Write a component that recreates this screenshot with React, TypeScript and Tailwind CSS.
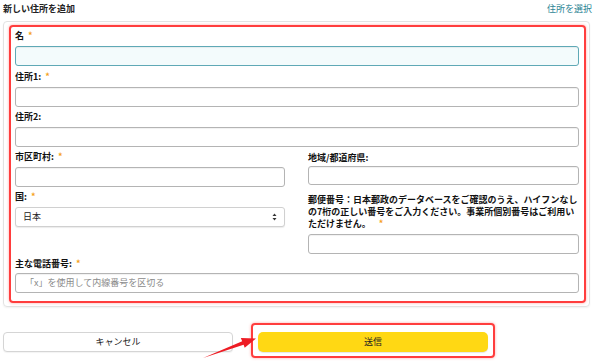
import React from "react";

const Star = () => <span className="text-[#f5a11c] ml-[4px]">*</span>;

const Label = ({ children, className = "" }: { children: React.ReactNode; className?: string }) => (
  <div className={"text-[9px] leading-[12px] font-bold text-[#111] " + className}>{children}</div>
);

const Input = ({ className = "", placeholder }: { className?: string; placeholder?: string }) => (
  <div
    className={
      "h-[20px] rounded-[3px] border border-[#b4b4b4] bg-white shadow-[inset_0_1px_1px_rgba(0,0,0,0.06)] flex items-center px-[9px] text-[9px] text-[#8a8a8a] " +
      className
    }
  >
    {placeholder}
  </div>
);

export default function App() {
  return (
    <div
      className="relative w-[600px] h-[364px] bg-white overflow-hidden"
      style={{ fontFamily: '"Noto Sans CJK JP", "Noto Sans", sans-serif' }}
    >
      <div className="h-[21px] flex justify-between items-start pt-[3px] pl-[3px] pr-[8px] text-[9px] leading-[12px]">
        <span className="font-bold text-[#222]">新しい住所を追加</span>
        <span className="text-[#2b8494]">住所を選択</span>
      </div>

      <div className="ml-[3px] w-[587px] border border-[#e2e2e2] rounded-[4px] shadow-[0_1px_2px_rgba(0,0,0,0.06)] pt-[3px] pl-[5px] pr-[3px] pb-[3px]">
        <div className="border-2 border-[#ff3d3d] rounded-[4px] shadow-[0_0_3px_rgba(255,60,60,0.45)] pt-[3px] pl-[4px] pr-[5px] pb-[8px]">
          <div className="mb-[5px]">
            <Label className="mb-[4px]">名<Star /></Label>
            <Input className="!border-[#5fa9b6] !bg-[#f3fbfc] shadow-[0_0_2px_rgba(95,169,182,0.6)]" />
          </div>
          <div className="mb-[4px]">
            <Label className="mb-[4px]">住所1:<Star /></Label>
            <Input />
          </div>
          <div className="mb-[4px]">
            <Label className="mb-[4px]">住所2:</Label>
            <Input />
          </div>

          <div className="flex gap-[23px]">
            <div className="w-[270px]">
              <div className="mb-[4px]">
                <Label className="mb-[4px]">市区町村:<Star /></Label>
                <Input />
              </div>
              <div>
                <Label className="mb-[4px]">国:<Star /></Label>
                <div className="h-[20px] rounded-[3px] border border-[#d0d0d0] bg-white shadow-[0_1px_1px_rgba(0,0,0,0.08)] flex items-center justify-between pl-[7px] pr-[7px] text-[9px] text-[#222]">
                  <span>日本</span>
                  <svg width="5" height="8" viewBox="0 0 5 8">
                    <path d="M0.5 3 L2.5 0.5 L4.5 3 Z" fill="#333" />
                    <path d="M0.5 5 L2.5 7.5 L4.5 5 Z" fill="#333" />
                  </svg>
                </div>
              </div>
            </div>
            <div className="flex-1">
              <div className="mb-[9px]">
                <Label className="pt-[1px] mb-[2px]">地域/都道府県:</Label>
                <Input className="!h-[19px]" />
              </div>
              <div className="mb-[4px]">
                <Label className="mb-[4px]">
                  <div className="whitespace-nowrap">郵便番号：日本郵政のデータベースをご確認のうえ、ハイフンなし</div>
                  <div className="whitespace-nowrap">の7桁の正しい番号をご入力ください。事業所個別番号はご利用い</div>
                  <div className="whitespace-nowrap">
                    ただけません。<span className="ml-[4px]"></span>
                    <Star />
                  </div>
                </Label>
                <Input />
              </div>
            </div>
          </div>

          <div>
            <Label className="mb-[3px]">主な電話番号:<Star /></Label>
            <Input placeholder="「x」を使用して内線番号を区切る" />
          </div>
        </div>
      </div>

      <div className="flex items-start mt-[16px] pl-[3px]">
        <div className="mt-[9px] w-[230px] h-[20px] rounded-[4px] border border-[#d5d5d5] bg-white shadow-[0_1px_1px_rgba(0,0,0,0.05)] flex items-center justify-center text-[9px] text-[#222]">
          キャンセル
        </div>
        <div className="ml-[18px] w-[244px] h-[35px] border-2 border-[#ff3d3d] rounded-[4px] shadow-[0_0_3px_rgba(255,60,60,0.45)] pt-[7px] pl-[5px] pr-[5px]">
          <div className="h-[20px] rounded-[5px] bg-[#ffd814] shadow-[0_1px_1px_rgba(0,0,0,0.1)] flex items-center justify-center text-[9px] text-[#222]">
            送信
          </div>
        </div>
      </div>

      <svg className="absolute left-0 top-0 pointer-events-none" width="600" height="364">
        <polygon
          points="203,358 243.6,344.8 244.7,347.8 256,338.5 240.8,338 242.2,341.2"
          fill="#ee1c24"
        />
      </svg>
    </div>
  );
}
